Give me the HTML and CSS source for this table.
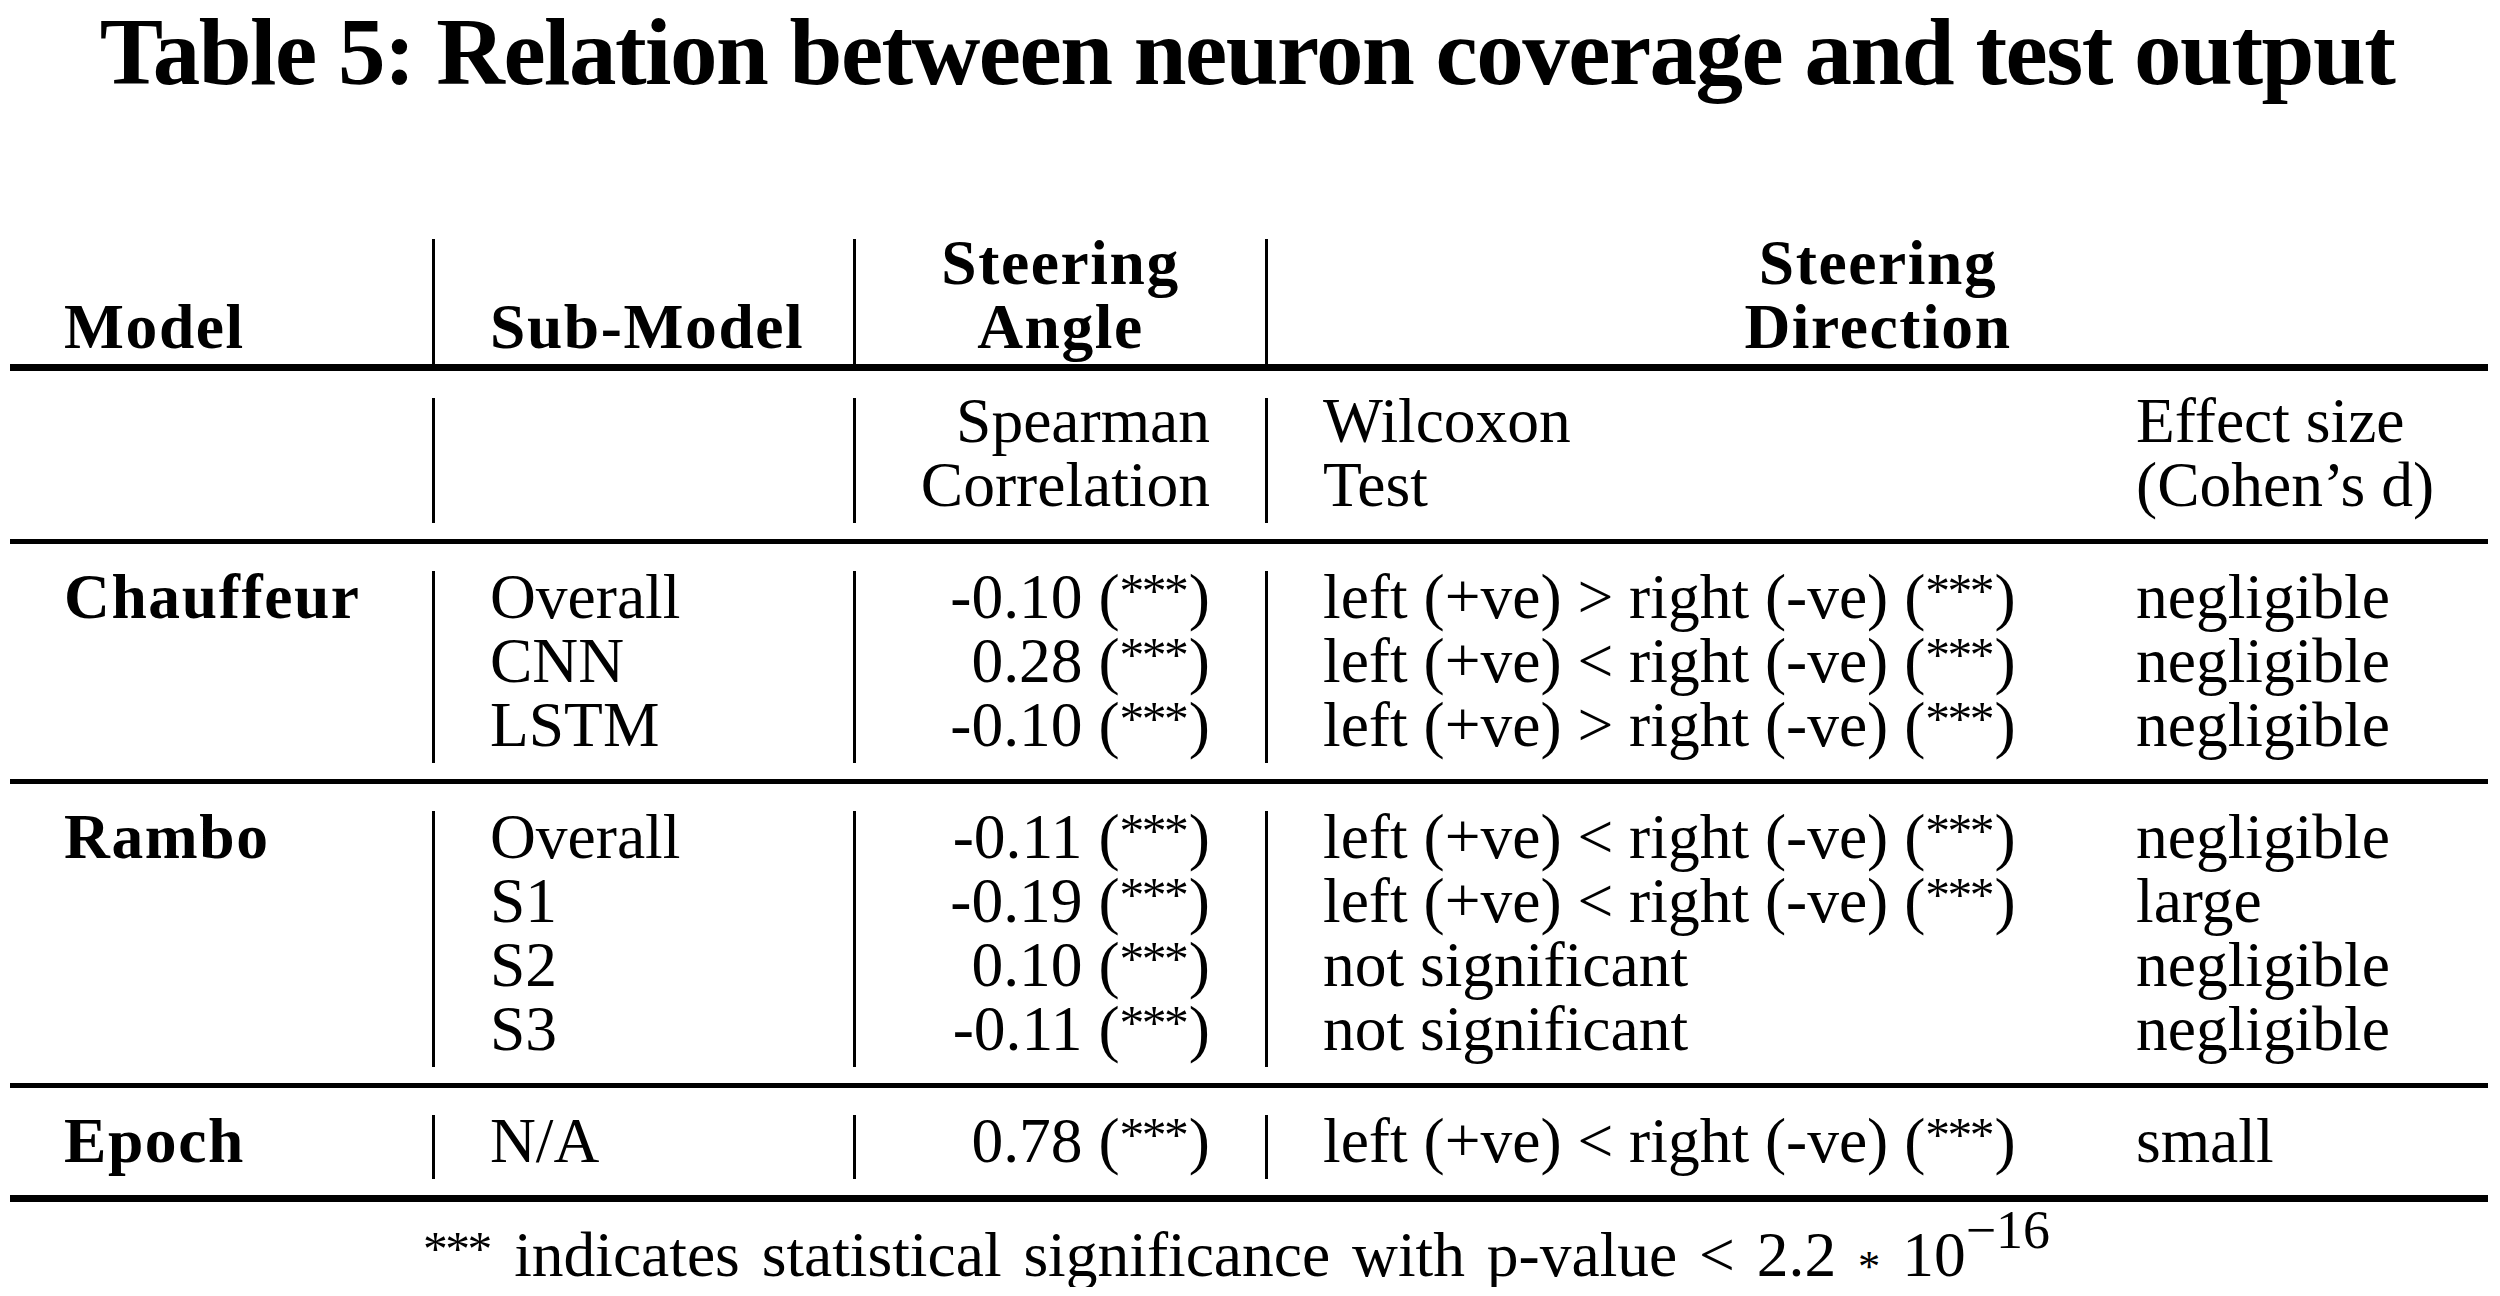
FILE: index.html
```html
<!DOCTYPE html>
<html lang="en">
<head>
<meta charset="utf-8">
<title>Table 5</title>
<link rel="stylesheet" href="styles.css">
</head>
<body>
<div class="page">
  <h1 class="title">Table 5: Relation between neuron coverage and test output</h1>
  <div class="table">
    <div class="block block-head bold">
      <div class="cell c1"><div class="txt">&nbsp;<br>Model</div></div>
      <div class="cell vl"><div class="txt">&nbsp;<br>Sub-Model</div></div>
      <div class="cell vl center"><div class="txt">Steering<br>Angle</div></div>
      <div class="cell vl center span2"><div class="txt">Steering<br>Direction</div></div>
    </div>
    <div class="block block-sub">
      <div class="cell c1"><div class="txt">&nbsp;</div></div>
      <div class="cell vl"><div class="txt">&nbsp;</div></div>
      <div class="cell vl right"><div class="txt">Spearman<br>Correlation</div></div>
      <div class="cell vl"><div class="txt">Wilcoxon<br>Test</div></div>
      <div class="cell c5"><div class="txt">Effect size<br>(Cohen’s d)</div></div>
    </div>
    <div class="block block-data">
      <div class="cell c1 bold"><div class="txt">Chauffeur</div></div>
      <div class="cell vl"><div class="txt">Overall<br>CNN<br>LSTM</div></div>
      <div class="cell vl right"><div class="txt">-0.10 (<span class="ast">***</span>)<br>0.28 (<span class="ast">***</span>)<br>-0.10 (<span class="ast">***</span>)</div></div>
      <div class="cell vl"><div class="txt">left (+ve) &gt; right (-ve) (<span class="ast">***</span>)<br>left (+ve) &lt; right (-ve) (<span class="ast">***</span>)<br>left (+ve) &gt; right (-ve) (<span class="ast">***</span>)</div></div>
      <div class="cell c5"><div class="txt">negligible<br>negligible<br>negligible</div></div>
    </div>
    <div class="block block-data">
      <div class="cell c1 bold"><div class="txt">Rambo</div></div>
      <div class="cell vl"><div class="txt">Overall<br>S1<br>S2<br>S3</div></div>
      <div class="cell vl right"><div class="txt">-0.11 (<span class="ast">***</span>)<br>-0.19 (<span class="ast">***</span>)<br>0.10 (<span class="ast">***</span>)<br>-0.11 (<span class="ast">***</span>)</div></div>
      <div class="cell vl"><div class="txt">left (+ve) &lt; right (-ve) (<span class="ast">***</span>)<br>left (+ve) &lt; right (-ve) (<span class="ast">***</span>)<br>not significant<br>not significant</div></div>
      <div class="cell c5"><div class="txt">negligible<br>large<br>negligible<br>negligible</div></div>
    </div>
    <div class="block block-data block-last">
      <div class="cell c1 bold"><div class="txt">Epoch</div></div>
      <div class="cell vl"><div class="txt">N/A</div></div>
      <div class="cell vl right"><div class="txt">0.78 (<span class="ast">***</span>)</div></div>
      <div class="cell vl"><div class="txt">left (+ve) &lt; right (-ve) (<span class="ast">***</span>)</div></div>
      <div class="cell c5"><div class="txt">small</div></div>
    </div>
    <p class="note"><span class="ast">***</span> indicates statistical significance with p-value &lt; 2.2 <span class="mast">*</span> 10<sup class="sup">−16</sup></p>
  </div>
</div>
</body>
</html>
```

FILE: styles.css
```css
html, body {
  margin: 0;
  padding: 0;
  background: #fff;
}

body {
  font-family: "Liberation Serif", "Times New Roman", serif;
  color: #000;
}

.page {
  width: 2500px;
}

.title {
  margin: 0;
  padding-right: 6px;
  font-size: 95px;
  line-height: 104px;
  font-weight: 700;
  letter-spacing: -1.5px;
  text-align: center;
  white-space: nowrap;
}

.table {
  width: 2478px;
  margin: 135px 0 0 10px;
  font-size: 63.5px;
  line-height: 64px;
}

.block {
  display: grid;
  grid-template-columns: 422px 421px 412px 816px 407px;
}

.block-head {
  border-bottom: 7px solid #000;
}

.block-sub,
.block-data {
  padding: 27px 0 16px;
  border-bottom: 5px solid #000;
}

.block-last {
  border-bottom-width: 7px;
}

.cell {
  padding: 0 55px;
  white-space: nowrap;
}

.c1 {
  padding-left: 54px;
}

.vl {
  border-left: 3px solid #000;
}

.right {
  text-align: right;
}

.center {
  text-align: center;
}

.span2 {
  grid-column: span 2;
}

.bold {
  font-weight: 700;
  letter-spacing: 1.6px;
}

.ast {
  font-size: 0.78em;
  line-height: 0;
  letter-spacing: -2.5px;
  margin-right: 2.5px;
  vertical-align: 11px;
}

.txt {
  margin: -6px 0 6px;
}

.block-head .txt {
  margin: -8px 0 5px;
}

.block-sub .txt {
  margin: -9px 0 6px;
}

.note {
  margin: 21px 0 0;
  padding-right: 25px;
  text-align: center;
  white-space: nowrap;
  word-spacing: 6px;
}

.mast {
  font-size: 0.7em;
  line-height: 0;
  vertical-align: -5px;
}

.sup {
  font-size: 0.85em;
  line-height: 0;
  vertical-align: 28px;
}
```
